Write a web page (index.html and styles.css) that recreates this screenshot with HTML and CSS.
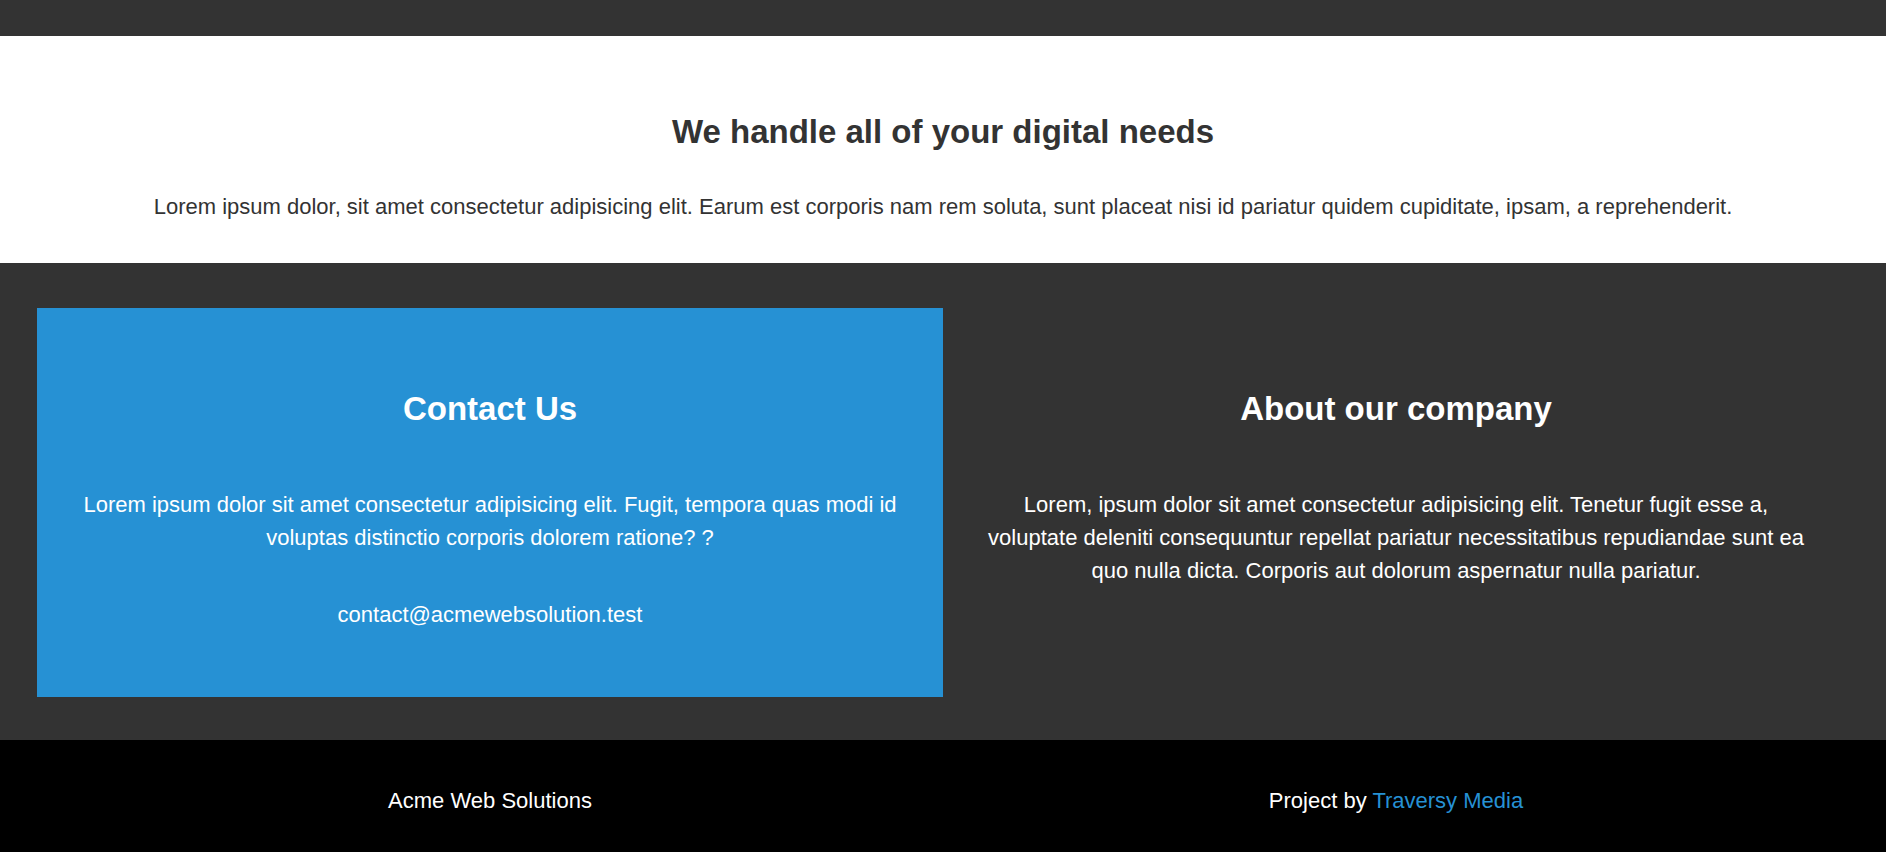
FILE: index.html
```html
<!DOCTYPE html>
<html lang="en">
<head>
<meta charset="UTF-8">
<title>Acme Web Solutions</title>
<link rel="stylesheet" href="styles.css">
</head>
<body>
  <div class="topbar"></div>
  <section class="intro">
    <h1 class="intro-title">We handle all of your digital needs</h1>
    <p class="intro-text">Lorem ipsum dolor, sit amet consectetur adipisicing elit. Earum est corporis nam rem soluta, sunt placeat nisi id pariatur quidem cupiditate, ipsam, a reprehenderit.</p>
  </section>
  <section class="boxes">
    <div class="box box-primary">
      <h2 class="box-title">Contact Us</h2>
      <p class="box-text">Lorem ipsum dolor sit amet consectetur adipisicing elit. Fugit, tempora quas modi id voluptas distinctio corporis dolorem ratione? ?</p>
      <p class="box-text">contact@acmewebsolution.test</p>
    </div>
    <div class="box">
      <h2 class="box-title">About our company</h2>
      <p class="box-text">Lorem, ipsum dolor sit amet consectetur adipisicing elit. Tenetur fugit esse a, voluptate deleniti consequuntur repellat pariatur necessitatibus repudiandae sunt ea quo nulla dicta. Corporis aut dolorum aspernatur nulla pariatur.</p>
    </div>
  </section>
  <footer class="footer">
    <p class="footer-text">Acme Web Solutions</p>
    <p class="footer-text">Project by <a class="footer-link" href="#">Traversy Media</a></p>
  </footer>
</body>
</html>
```
FILE: styles.css
```css
* {
  box-sizing: border-box;
}

html, body {
  margin: 0;
  padding: 0;
}

html {
  background: #000;
}

body {
  font-family: "Liberation Sans", Arial, sans-serif;
  font-size: 22px;
  line-height: 1.5;
  color: #333;
  background: #000;
  overflow: hidden;
}

.topbar {
  height: 36px;
  background: #333;
}

.intro {
  padding: 76px 40px 40px;
  text-align: center;
  background: #fff;
}

.intro-title {
  margin: 0 0 38px;
  font-size: 33px;
  line-height: 1.2;
  font-weight: bold;
  color: #333;
}

.intro-text {
  margin: 0;
}

.boxes {
  display: grid;
  grid-template-columns: 1fr 1fr;
  padding: 45px 37px 43px;
  background: #333;
  color: #fff;
}

.box {
  padding: 36px 40px;
  text-align: center;
}

.box-primary {
  background: #2691d4;
}

.box-title {
  margin: 45px 0 60px;
  font-size: 33px;
  line-height: 1.2;
  font-weight: bold;
}

.box-text {
  margin: 0 0 44px;
}

.box-text:last-child {
  margin-bottom: 30px;
}

.footer {
  display: grid;
  grid-template-columns: 1fr 1fr;
  padding: 44px 37px 44px;
  background: #000;
  color: #fff;
  text-align: center;
}

.footer-text {
  margin: 0;
}

.footer-link {
  color: #2691d4;
  text-decoration: none;
}
```
